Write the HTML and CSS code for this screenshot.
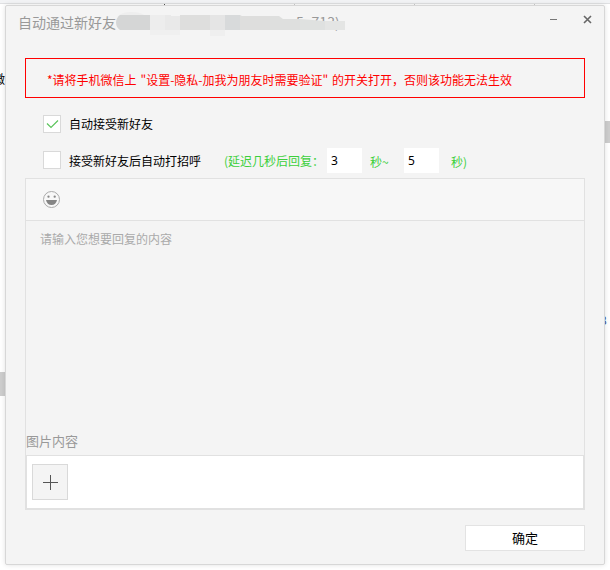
FILE: index.html
```html
<!DOCTYPE html>
<html lang="zh-CN">
<head>
<meta charset="utf-8">
<title>自动通过新好友</title>
<link rel="stylesheet" href="styles.css">
</head>
<body>
<div class="desktop">
  <span class="tick tick-a"></span><span class="tick tick-b"></span><span class="tick tick-c"></span><span class="tick tick-d"></span>
  <span class="side-text">微</span>
  <span class="side-text side-text-right">8</span>
  <span class="thumb thumb-left"></span>
  <span class="thumb thumb-right"></span>
</div>
<main class="window">
  <header class="titlebar">
    <h1 class="title">自动通过新好友<span class="title-id">5_713)</span>
      <svg class="mosaic" width="230" height="26" viewBox="0 0 230 26">
        <path fill="#e9e9e9" d="M2 6Q7 2 15 2T28 5z" opacity=".6"/>
        <path fill="#d5d6d6" d="M4 5h30v15H4Q0 17 0 12.500T4 5z"/>
        <path fill="#ededed" d="M34 5h15v15H34z"/>
        <path fill="#f0f0f0" d="M34 20h30v5H34z"/>
        <path fill="#e9e9e9" d="M49 5h6v1h9v14H49z"/>
        <path fill="#dededd" d="M64 5h30v15H64z"/>
        <path fill="#e5e5e5" d="M94 5h15v15H94z"/>
        <path fill="#efefef" d="M94 20h15v6H94z"/>
        <path fill="#d8dadb" d="M109 5h15v15h-15z"/>
        <path fill="#dededd" d="M124 5l2 1h28v14h-30z"/>
        <path fill="#dedfde" d="M154 6h9l4 3h17v11h-30z"/>
        <path fill="#dfe1e0" d="M184 9l25 2v9h-25z"/>
        <path fill="#e4e5e4" d="M209 11h20v9h-20z"/>
      </svg>
    </h1>
    <div class="controls">
      <svg width="9" height="9" viewBox="0 0 9 9"><path d="M1 4.500h7" stroke="#777"/></svg>
      <svg width="9" height="9" viewBox="0 0 9 9"><path d="M1 1l7 7M8 1L1 8" stroke="#666" stroke-width="1.600"/></svg>
    </div>
  </header>
  <p class="notice">*请将手机微信上 "设置-隐私-加我为朋友时需要验证" 的开关打开，否则该功能无法生效</p>
  <div class="option option-first">
    <span class="checkbox"><svg width="16" height="16" viewBox="0 0 16 16"><path d="M3 7.500l4 4 7-7" fill="none" stroke="#5cc45c" stroke-width="1.200"/></svg></span>
    <span class="label">自动接受新好友</span>
  </div>
  <div class="option option-second">
    <span class="checkbox"></span>
    <span class="label label-greet">接受新好友后自动打招呼</span>
    <span class="delay">(延迟几秒后回复：</span>
    <input class="seconds" value="3">
    <span class="unit">秒~</span>
    <input class="seconds" value="5">
    <span class="unit unit-last">秒)</span>
  </div>
  <section class="editor">
    <div class="toolbar">
      <svg width="18" height="18" viewBox="0 0 18 18"><circle cx="8.500" cy="8.500" r="8" fill="#f8f8f8" stroke="#aaa"/><circle cx="5.500" cy="5.700" r="1.150" fill="#888"/><circle cx="11.700" cy="5.700" r="1.150" fill="#888"/><path d="M3 9h11Q13 14 8.500 14T3 9z" fill="#858585"/></svg>
    </div>
    <div class="message">请输入您想要回复的内容</div>
    <div class="caption">图片内容</div>
    <div class="images">
      <div class="add"><svg width="16" height="16" viewBox="0 0 16 16"><path d="M0 8.500h15M7.500 1v15" stroke="#555"/></svg></div>
    </div>
  </section>
  <footer class="footer"><button class="confirm">确定</button></footer>
</main>
</body>
</html>
```

FILE: styles.css
```css
* { box-sizing: border-box; }

body {
  margin: 0;
  width: 610px;
  height: 570px;
  padding: 5px;
  overflow: hidden;
  background: #fff;
  font: 12px/18px "Noto Sans CJK SC", sans-serif;
  color: #000;
}

.desktop {
  position: absolute;
  inset: 0;
  background: linear-gradient(#f2f3f5 0 3px, #dfe0e2 3px 4px, #fff 4px);
}

.tick { position: absolute; width: 1px; height: 1px; top: 4px; background: #555; }
.tick-a { left: 164px; }
.tick-b { left: 294px; background: #ccc; }
.tick-c { left: 414px; background: #ccc; }
.tick-d { left: 534px; background: #ccc; }

.side-text { position: absolute; left: -7px; top: 70px; }
.side-text-right { left: 600px; top: 311px; color: #3b4f8c; }

.thumb { position: absolute; background: #cdcdcd; }
.thumb-left { left: 0; top: 372px; width: 6px; height: 24px; }
.thumb-right { left: 604px; top: 121px; width: 6px; height: 22px; }

.window {
  position: relative;
  display: flex;
  flex-direction: column;
  width: 600px;
  height: 560px;
  padding: 0 19px;
  border: 1px solid #d7d7d7;
  border-radius: 2px;
  background: #f4f4f4;
  box-shadow: 0 0 5px rgba(0, 0, 0, .12);
}

.titlebar {
  display: flex;
  justify-content: space-between;
  height: 52px;
  margin: 0 -7px;
}

.title {
  position: relative;
  margin: 6px 0 0;
  font-size: 14px;
  line-height: 20px;
  font-weight: 400;
  color: #999;
  white-space: nowrap;
}

.title-id { margin-left: 180px; }
.mosaic { position: absolute; left: 98px; top: -2px; }

.controls { display: flex; gap: 25px; margin: 9px 0 0; }
.controls svg { display: block; }

.notice {
  flex: none;
  height: 40px;
  margin: 0;
  padding: 12px 21px 0;
  border: 1px solid #f00;
  color: #f00;
  white-space: nowrap;
  word-spacing: 1.2px;
}

.option { display: flex; flex: none; padding-left: 18px; white-space: nowrap; }
.option-first { height: 18px; margin-top: 17px; }
.option-second { height: 25px; margin-top: 15px; align-items: center; }

.checkbox {
  flex: none;
  width: 18px;
  height: 18px;
  margin-right: 8px;
  border: 1px solid #d9d9d9;
  background: #fff;
}
.option-second .checkbox { margin-bottom: 1px; }
.checkbox svg { display: block; }

.label-greet { width: 155px; }
.delay { width: 103px; color: #3cd03c; }

.seconds {
  width: 35px;
  height: 25px;
  padding: 0 4px;
  border: 0;
  background: #fff;
  font: 12px "Noto Sans", sans-serif;
}

.unit { width: 42px; padding: 3px 0 0 8px; color: #3cd03c; }
.unit-last { padding-left: 12px; }

.editor {
  display: flex;
  flex-direction: column;
  flex: none;
  height: 332px;
  margin-top: 5px;
  border: 1px solid #e1e1e1;
}

.toolbar {
  height: 42px;
  padding: 12px 17px;
  border-bottom: 1px solid #e1e1e1;
  background: #f7f7f7;
}
.toolbar svg { display: block; }

.message { flex: 1; padding: 9px 14px; color: #aaa; }
.caption { height: 24px; font-size: 13px; line-height: 20px; color: #999; }

.images {
  height: 54px;
  padding: 8px 5px;
  border: 1px solid #e1e1e1;
  background: #fff;
}

.add {
  width: 36px;
  height: 36px;
  padding: 9px 10px;
  border: 1px solid #d9d9d9;
  background: #f4f4f4;
}
.add svg { display: block; }

.footer { display: flex; justify-content: flex-end; margin-top: 15px; }

.confirm {
  width: 120px;
  height: 26px;
  padding: 0;
  border: 1px solid #e3e3e3;
  background: #fff;
  color: #000;
  font: 13px/20px "Noto Sans CJK SC", sans-serif;
}
```
